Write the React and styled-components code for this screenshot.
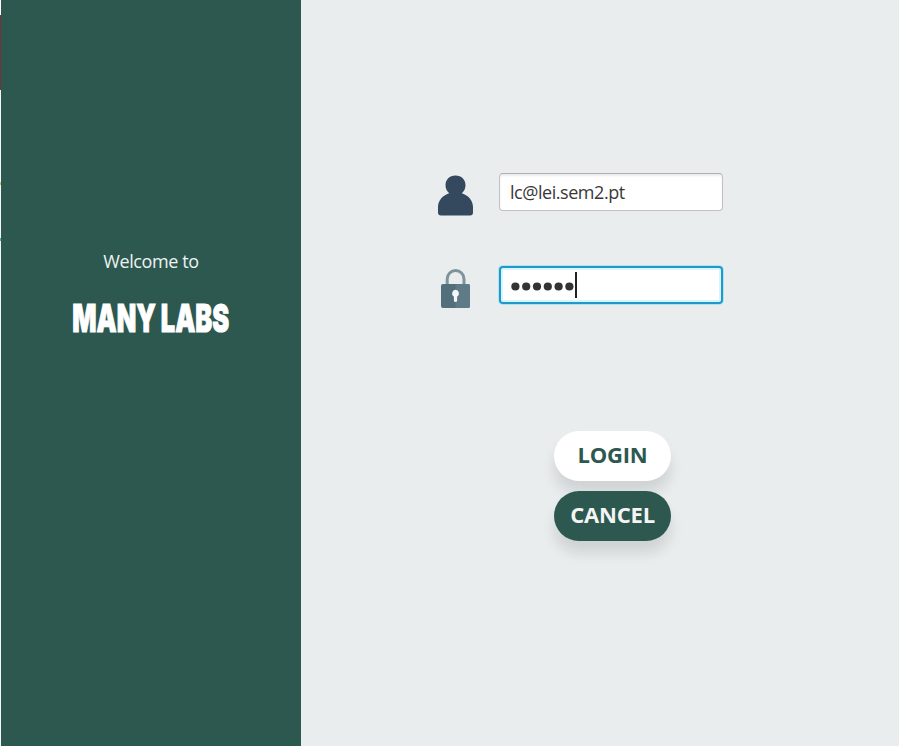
import React from "react";
import styled, { createGlobalStyle } from "styled-components";

const GlobalStyle = createGlobalStyle`
  *, *::before, *::after { box-sizing: border-box; }
  body { margin: 0; background: #fff; overflow: hidden; font-family: "Open Sans", "Noto Sans", sans-serif; }
`;

const Window = styled.div`
  display: grid;
  grid-template-columns: 1px 300px 1fr;
  width: 100%;
  height: 746px;
`;

const Edge = styled.div`
  background: linear-gradient(#fff 0 15px, #713437 15px 90px, #f4f7f6 90px 182px,
    #c3c85c 182px 185px, #f4f7f6 185px 238px, #50aeb8 238px 241px, #f4f7f6 241px);
`;

const Sidebar = styled.aside`
  display: flex;
  flex-direction: column;
  align-items: center;
  padding-top: 248px;
  background: #2d584f;
`;

const Welcome = styled.p`
  margin: 0;
  font-size: 18px;
  line-height: 27px;
  letter-spacing: -0.4px;
  color: #eef2f1;
  white-space: nowrap;
`;

const Brand = styled.h1`
  margin: 20px 0 0;
  font-family: Inter, sans-serif;
  font-size: 39px;
  font-weight: 900;
  line-height: 46px;
  color: #fff;
  white-space: nowrap;
  -webkit-text-stroke: 1px #fff;
  transform: scaleX(0.65);
`;

const Content = styled.main`
  display: flex;
  flex-direction: column;
  padding: 172px 0 0 136px;
  background: #e9edee;
`;

const Form = styled.form`
  display: flex;
  flex-direction: column;
`;

const FieldRow = styled.label`
  display: grid;
  grid-template-columns: 37px 226px;
  column-gap: 24px;
  align-items: start;
  height: 40px;
  margin-bottom: 53px;
`;

const Field = styled.span`
  display: flex;
  align-items: center;
  justify-self: start;
  width: 224px;
  height: 38px;
  margin: 1px 0 0 1px;
  padding: 0 0 1px 10px;
  border: ${(p) => (p.$focused ? "2px solid #1e9aca" : "1px solid #bfc1c2")};
  border-top-color: ${(p) => (p.$focused ? "#1e9aca" : "#adb0b1")};
  border-radius: 4px;
  background: #fff;
  box-shadow: ${(p) =>
    p.$focused
      ? "inset 0 0 0 2px #d8f5fe, 0 0 0 1px #b6e2ed"
      : "inset 0 2px 2px #ededed"};
  font-size: 18px;
  color: #383838;
`;

const Email = styled.span`
  letter-spacing: -0.45px;
  margin-top: 1px;
  white-space: nowrap;
`;

const Dots = styled.svg`
  width: 64px;
  height: 9px;
  margin-top: 4px;
  fill: #333;
`;

const Caret = styled.i`
  width: 1.5px;
  height: 26px;
  background: #222;
`;

const Actions = styled.div`
  display: flex;
  flex-direction: column;
  gap: 10px;
  width: 116.5px;
  margin: 73px 0 0 117.3px;
`;

const Button = styled.button`
  display: flex;
  align-items: center;
  justify-content: center;
  height: 50px;
  padding: 0 0 4px;
  border: 0;
  border-radius: 25px;
  font: 700 22px "Open Sans", sans-serif;
  letter-spacing: -0.2px;
  color: ${(p) => (p.$primary ? "#2d584f" : "#f4f4f4")};
  background: ${(p) => (p.$primary ? "#fff" : "#2d584f")};
  box-shadow: 0 12px 14px rgba(0, 0, 0, 0.11);
`;

const Icon = styled.svg`
  width: 37px;
  height: 45px;
`;

const UserIcon = () => (
  <Icon viewBox="0 0 37 45">
    <path
      fill="#34495e"
      d="M18.500 3.500c-6 0-10 4-10 9.700 0 3.300 1.300 6 3.700 8C5.500 23.300 1 28.500 1 35v5.500Q1 43.500 4 43.500h29q3 0 3-3V35c0-6.500-4.500-11.700-11.200-13.800 2.400-2 3.700-4.700 3.700-8 0-5.700-4-9.700-10-9.700z"
    />
  </Icon>
);

const LockIcon = () => (
  <Icon viewBox="0 0 37 45">
    <path d="M10.200 20V14a8.400 8.400 0 0 1 16.800 0v6" fill="none" stroke="#7d949c" strokeWidth="3" />
    <rect x="4" y="19" width="29" height="24" rx="2" fill="#536f7c" />
    <path d="M18.500 19H31q2 0 2 2V41q0 2-2 2H18.500z" fill="#5f7b88" />
    <path d="M18.500 24.800a3.700 3.700 0 0 1 1.600 6.900v3.700a1.600 1.600 0 0 1-3.200 0v-3.700a3.700 3.700 0 0 1 1.600-6.900z" fill="#f5f7f8" />
  </Icon>
);

const PasswordDots = () => (
  <Dots viewBox="0 0 64 9">
    {Array.from({ length: 6 }, (_, i) => (
      <circle key={i} cx={4.4 + i * 10.8} cy="4.5" r="4.1" />
    ))}
  </Dots>
);

export default function App() {
  return (
    <>
      <GlobalStyle />
      <Window>
        <Edge />
        <Sidebar>
          <Welcome>Welcome to</Welcome>
          <Brand>MANY LABS</Brand>
        </Sidebar>
        <Content>
          <Form>
            <FieldRow>
              <UserIcon />
              <Field>
                <Email>lc@lei.sem2.pt</Email>
              </Field>
            </FieldRow>
            <FieldRow>
              <LockIcon />
              <Field $focused>
                <PasswordDots />
                <Caret />
              </Field>
            </FieldRow>
            <Actions>
              <Button type="button" $primary>LOGIN</Button>
              <Button type="button">CANCEL</Button>
            </Actions>
          </Form>
        </Content>
      </Window>
    </>
  );
}
